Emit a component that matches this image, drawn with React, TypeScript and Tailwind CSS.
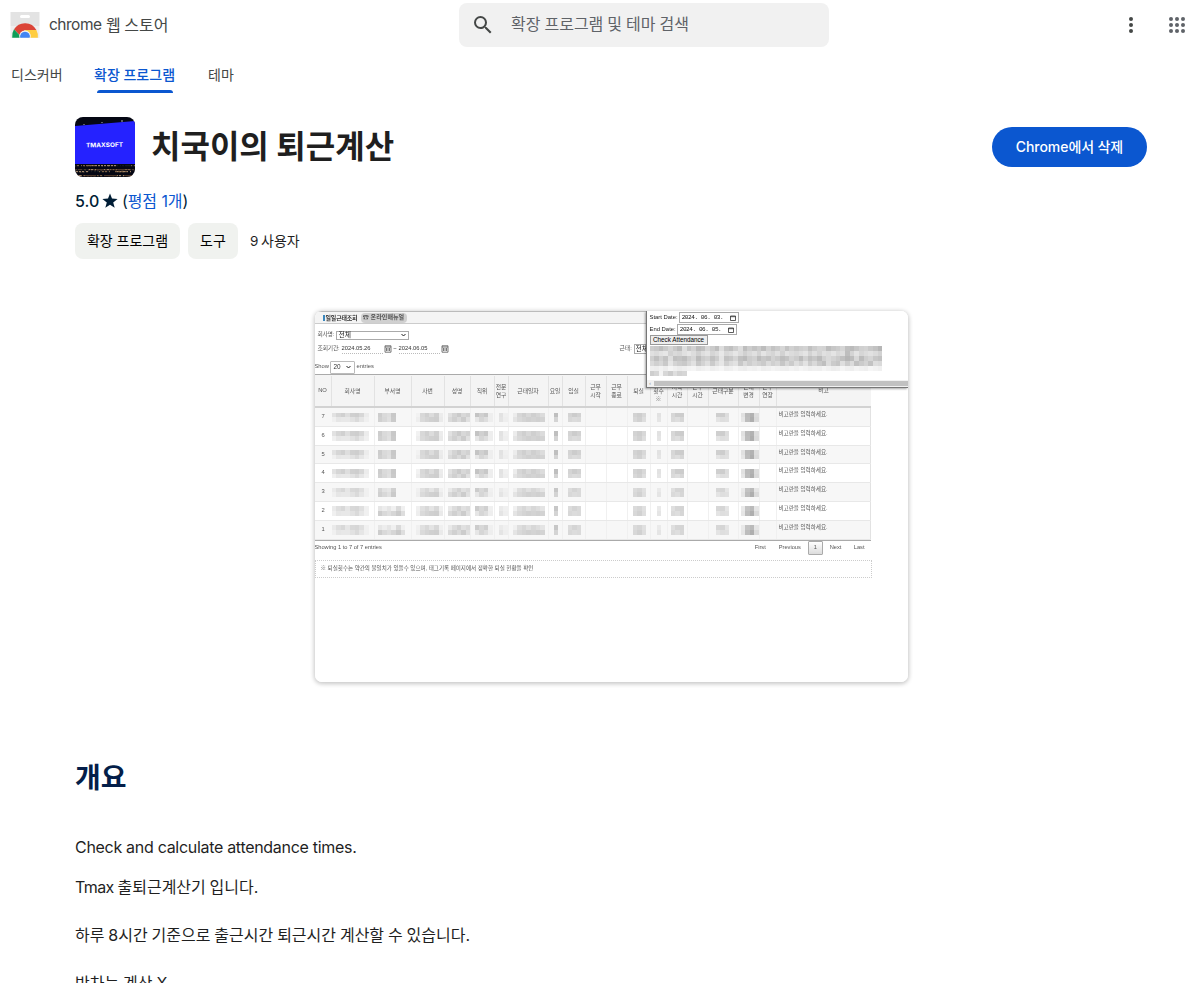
import React from "react";

type MosaicColumn = {
  label: string;
  width: string;
  offset: string;
  top: number[];
  bottom: number[];
};

const columns: MosaicColumn[] = [
  { label: "회사명", width: "w-[43px]", offset: "pl-0", top: [226, 214, 208, 222, 208, 206, 215, 236], bottom: [240, 230, 232, 232, 226, 218, 230, 240] },
  { label: "부서명", width: "w-[37px]", offset: "pl-[3px]", top: [205, 218, 222, 200], bottom: [208, 216, 224, 202] },
  { label: "사번", width: "w-[33px]", offset: "pl-[4px]", top: [242, 216, 208, 220, 208, 236], bottom: [238, 218, 212, 208, 206, 234] },
  { label: "성명", width: "w-[26px]", offset: "pl-[3px]", top: [225, 212, 202, 216, 210], bottom: [218, 208, 218, 204, 224] },
  { label: "직위", width: "w-[24px]", offset: "pl-[4px]", top: [196, 208, 200, 238], bottom: [230, 214, 222, 238] },
  { label: "전문\n연구", width: "w-[14px]", offset: "pl-[4px]", top: [226, 240], bottom: [228, 238] },
  { label: "근태일자", width: "w-[40px]", offset: "pl-[4px]", top: [236, 214, 207, 216, 207, 213, 220], bottom: [228, 217, 212, 208, 211, 208, 211] },
  { label: "요일", width: "w-[14px]", offset: "pl-[5px]", top: [191], bottom: [212] },
  { label: "입실", width: "w-[23px]", offset: "pl-[5px]", top: [212, 204, 210], bottom: [216, 220, 218] },
  { label: "근무\n시작", width: "w-[21px]", offset: "pl-0", top: [], bottom: [] },
  { label: "근무\n종료", width: "w-[21px]", offset: "pl-0", top: [], bottom: [] },
  { label: "퇴실", width: "w-[23px]", offset: "pl-[5px]", top: [211, 206, 216], bottom: [216, 209, 222] },
  { label: "외출\n횟수\n※", width: "w-[17px]", offset: "pl-[6px]", top: [226], bottom: [229] },
  { label: "지각\n시간", width: "w-[20px]", offset: "pl-[3px]", top: [215, 205, 204], bottom: [218, 222, 214] },
  { label: "근무\n시간", width: "w-[21px]", offset: "pl-0", top: [], bottom: [] },
  { label: "근태구분", width: "w-[30px]", offset: "pl-[7px]", top: [207, 205, 221], bottom: [228, 222, 224] },
  { label: "근태\n변경", width: "w-[21px]", offset: "pl-[2px]", top: [225, 187, 178, 221], bottom: [230, 189, 174, 218] },
  { label: "근무\n연장", width: "w-[17px]", offset: "pl-0", top: [], bottom: [] },
];

const rows = [7, 6, 5, 4, 3, 2, 1];

const blurRows = [
  [205, 200, 190, 202, 214, 201, 188, 222, 198, 210, 188, 194, 215, 203, 190, 221, 198, 192, 207, 222, 190, 205, 195, 204, 189, 210, 195, 203, 214, 195, 209, 201, 207, 211, 193, 205, 213, 211, 189, 199, 204, 213, 192, 187, 198, 208, 211, 201, 194, 182],
  [224, 219, 226, 230, 210, 218, 214, 224, 230, 221, 208, 222, 228, 213, 220, 232, 216, 221, 230, 220, 208, 217, 224, 211, 228, 218, 213, 224, 210, 226, 220, 216, 222, 228, 211, 223, 212, 224, 220, 228, 217, 222, 190, 212, 227, 214, 220, 225, 219, 210],
  [207, 192, 208, 195, 222, 192, 196, 190, 206, 215, 188, 204, 210, 193, 205, 228, 195, 200, 213, 193, 187, 204, 209, 188, 200, 194, 210, 202, 190, 196, 211, 204, 188, 209, 192, 200, 187, 208, 218, 211, 203, 193, 182, 189, 216, 188, 206, 213, 199, 194],
  [218, 208, 215, 201, 229, 212, 205, 201, 214, 225, 199, 211, 223, 203, 221, 231, 208, 220, 226, 200, 218, 206, 215, 209, 202, 219, 208, 215, 198, 215, 203, 222, 211, 227, 204, 217, 201, 191, 220, 203, 197, 222, 204, 219, 193, 203, 211, 195, 222, 218],
  [239, 237, 242, 237, 245, 240, 236, 239, 243, 245, 238, 241, 244, 239, 242, 246, 238, 240, 245, 239, 237, 242, 240, 244, 238, 240, 244, 241, 239, 238, 243, 240, 245, 242, 238, 240, 239, 245, 241, 237, 239, 245, 240, 238, 244, 241, 239, 246, 243, 240],
];

const gray = (value: number) => `rgb(${value} ${value} ${value})`;

function Mosaic({ column, row }: { column: MosaicColumn; row: number }) {
  const lower = row < 4;
  const long = column.label === "부서명" && row < 3;
  const top = long ? [222, 229, 221, 236, 209, 238] : column.top;
  const bottom = long ? [205, 217, 223, 214, 202, 222] : column.bottom;
  return (
    <div className={`flex flex-col pt-[4.5px] ${column.offset}`}>
      {[top, bottom].map((shades, line) => (
        <div key={line} className="flex h-[4.7px]">
          {shades.map((shade, index) => (
            <span key={index} className="h-full w-[4.67px] shrink-0" style={{ backgroundColor: gray(lower && line === 0 ? Math.min(shade + 8, 240) : shade) }} />
          ))}
        </div>
      ))}
    </div>
  );
}

function CalendarIcon({ className }: { className: string }) {
  return (
    <svg className={className} viewBox="0 0 8 8" fill="none" stroke="currentColor" strokeWidth=".8">
      <path d="M1 .8h6v6.4H1zM1 2h6M2.5 3v3M4 3v3M5.5 3v3" />
    </svg>
  );
}

function DateField({ children }: { children: string }) {
  return (
    <span className="flex h-[11px] w-[60px] items-center justify-between border border-[#aaa] pl-[2px] pr-[2px] font-['Liberation_Mono',monospace] text-[6px] leading-none text-[#111]">
      <span className="whitespace-pre tracking-[-0.4px]">{children}</span>
      <svg className="h-[6px] w-[6px]" viewBox="0 0 6 6" fill="none" stroke="#333" strokeWidth=".8">
        <path d="M.5 1h5v4.5h-5zM.5 1.7h5" />
      </svg>
    </span>
  );
}

function AttendancePopup() {
  return (
    <div className="absolute right-0 top-0 flex h-[77px] w-[262px] flex-col border-b border-l border-[#777] bg-white pt-[1px] font-['Liberation_Sans','Noto_Sans_CJK_KR',sans-serif] text-[5.9px] leading-none text-[#222] shadow-[-1px_1px_2px_rgba(0,0,0,.35)]">
      <div className="flex h-[11px] items-center gap-[1px] pl-[3px]"><span>Start Date:</span><DateField>{"2024. 06. 03."}</DateField></div>
      <div className="mt-[1px] flex h-[11px] items-center gap-[1px] pl-[3px]"><span>End Date:</span><DateField>{"2024. 06. 05."}</DateField></div>
      <div className="ml-[3px] flex h-[10px] w-[58px] items-center justify-center border border-[#999] bg-[#eee] text-[6.3px] text-black">Check Attendance</div>
      <div className="mt-[1px] pl-[3px]">
        {blurRows.map((shades, line) => (
          <div key={line} className="flex h-[5px]">
            {shades.map((shade, index) => <span key={index} className="h-full w-[4.66px]" style={{ backgroundColor: gray(shade) }} />)}
          </div>
        ))}
        <div className="flex h-[5px]">
          {[206, 214, 244, 215, 204, 222, 210, 214].map((shade, index) => <span key={index} className="h-full w-[4.66px]" style={{ backgroundColor: gray(shade) }} />)}
        </div>
      </div>
      <div className="mt-auto flex h-[7px] items-center bg-[#f1f1f1]"><span className="w-[7px] text-center text-[5px] text-[#888]">‹</span><span className="h-[5px] flex-1 bg-[#c1c1c1]" /></div>
    </div>
  );
}

function AttendanceSheet() {
  return (
    <div className="relative h-[371px] w-[593px] overflow-hidden rounded-[7px] bg-white font-['Liberation_Sans','Noto_Sans_CJK_KR',sans-serif] text-[5.8px] leading-none text-[#555]">
      <div className="blur-[0.25px]">
        <div className="flex h-[13px] items-center border-b border-[#ccc] border-t border-t-[#bbb] bg-[#f4f4f4] pl-[8px]">
          <span className="h-[6px] w-[2px] bg-[#3a87bd]" />
          <span className="ml-[1px] w-[32px] whitespace-nowrap text-[6px] font-bold tracking-[-0.2px] text-[#333]">일일근태조회</span>
          <span className="ml-[3px] flex h-[10px] w-[46px] items-center justify-center whitespace-nowrap rounded-[4px] bg-[#d0d0d0] text-[6.1px] font-bold text-[#555]">☎ 온라인매뉴얼</span>
        </div>
        <div className="mt-[6px] flex h-[10px] items-center pl-[3px]">
          <span className="w-[18px] tracking-[-.3px]">회사명:</span>
          <span className="flex h-[9px] w-[73px] items-center justify-between border border-[#aaa] px-[2px] text-[6.8px] text-[#222]">전체<svg className="h-[4px] w-[5px]" viewBox="0 0 5 4" fill="none" stroke="#222"><path d="m.5 1 2 2 2-2" /></svg></span>
        </div>
        <div className="mt-[4px] flex h-[10px] items-center pl-[3px]">
          <span className="w-[24px] whitespace-nowrap tracking-[-.2px]">조회기간:</span>
          <span className="flex h-[9px] w-[41px] items-center border-b border-dotted border-[#bbb] text-[#333]">2024.05.26</span>
          <CalendarIcon className="ml-[1px] h-[8px] w-[8px]" />
          <span className="w-[7px] text-center">~</span>
          <span className="flex h-[9px] w-[41px] items-center border-b border-dotted border-[#bbb] text-[#333]">2024.06.05</span>
          <CalendarIcon className="ml-[1px] h-[8px] w-[8px]" />
          <span className="ml-[171px] w-[14px] whitespace-nowrap">근태:</span>
          <span className="flex h-[10px] w-[30px] items-center border border-[#aaa] pl-[1px] text-[6.8px] text-[#222]">전체</span>
        </div>
        <div className="mt-[6px] flex h-[14px] items-center">
          <span className="w-[15px]">Show</span>
          <span className="flex h-[13px] w-[25px] items-center justify-between rounded-[1px] border border-[#bbb] px-[3px] text-[6.4px] text-[#333]">20<svg className="h-[4px] w-[5px]" viewBox="0 0 5 4" fill="none" stroke="#222"><path d="m.5 1 2 2 2-2" /></svg></span>
          <span className="ml-[2px]">entries</span>
        </div>
        <div className="flex h-[34px] w-[556px] border-b-2 border-t border-b-[#d2d2d2] border-t-[#aaa] bg-[#f4f4f4] pt-[1px] text-[5.8px]">
          <span className="flex w-[17px] items-center justify-center border-r border-[#e2e2e2]">NO</span>
          {columns.map((column) => <span key={column.label + column.width} className={`flex shrink-0 items-center justify-center whitespace-pre border-r border-[#e2e2e2] text-center leading-[8px] ${column.width}`}>{column.label}</span>)}
          <span className="flex flex-1 items-center justify-center">비고</span>
        </div>
        <div className="w-[556px] border-b border-[#aaa]">
          {rows.map((row) => (
            <div key={row} className={`flex h-[18.8px] border-b border-[#e8e8e8] ${row % 2 ? "bg-[#f7f7f7]" : "bg-white"}`}>
              <span className="flex w-[17px] items-center justify-center">{row}</span>
              {columns.map((column, index) => <div key={index} className={`shrink-0 overflow-hidden border-r border-[#f0f0f0] ${column.width}`}><Mosaic column={column} row={row} /></div>)}
              <span className="flex flex-1 items-start whitespace-nowrap border-r border-[#e2e2e2] pl-[2px] pt-[4px] text-[5.6px] tracking-[-.03px]">비고란을 입력하세요.</span>
            </div>
          ))}
        </div>
        <div className="flex h-[15px] w-[556px] items-center justify-between text-[5.7px]">
          <span>Showing 1 to 7 of 7 entries</span>
          <div className="flex items-center pr-[6px]">
            <span className="w-[24px]">First</span><span className="w-[29px]">Previous</span><span className="flex h-[14px] w-[15px] items-center justify-center rounded-[1px] border border-[#aaa] bg-linear-to-b from-white to-[#dcdcdc]">1</span><span className="ml-[7px] w-[24px]">Next</span><span>Last</span>
          </div>
        </div>
        <div className="mt-[4px] flex h-[18px] w-[557px] items-center border border-dotted border-[#ccc] pl-[5px] pt-[1px] text-[5.55px]">※ 퇴실횟수는 약간의 불일치가 있을수 있으며, 태그기록 페이지에서 정확한 퇴실 현황을 확인</div>
        <AttendancePopup />
      </div>
    </div>
  );
}

function StoreLogo() {
  return (
    <svg className="h-[27px] w-[30px]" viewBox="0 0 30 27">
      <path fill="#e3e3e3" d="M.5 0h29v14H.5z" />
      <path fill="#eee" d="M.5 14h29v12H.5z" />
      <rect x="10" y="3" width="10" height="3" rx="1.5" fill="white" />
      <path fill="#db4437" d="M4 17.3A12.9 12.9 0 0 1 26.4 18H15l-5.5 5z" />
      <path fill="#0f9d58" d="M4 17.3A13 13 0 0 0 2.2 25.8H12z" />
      <path fill="#ffcd40" d="M15 18h11.4a13 13 0 0 1 1.4 7.8H17z" />
      <path fill="#f1f1f1" d="M9.3 25.8a5.9 5.9 0 1 1 11.4 0z" />
      <path fill="#4285f4" d="M10.4 25.8a4.8 4.8 0 1 1 9.2 0z" />
    </svg>
  );
}

const crowdColors = ["#7b5f43", "#24262c", "#315049", "#a18467", "#1a1a20", "#4d382a", "#131a1f", "#65706a", "#2a211c"];

function ExtensionIcon() {
  return (
    <svg className="h-[60px] w-[60px] rounded-[8px]" viewBox="0 0 60 60">
      <path fill="#050713" d="M0 0h60v60H0z" />
      <path fill="#2522ff" d="m0 9 60-5v43H0z" />
      <path stroke="#ddd" strokeWidth=".8" d="M9 7v1M27 5v1M47 3v2" />
      {Array.from({ length: 220 }, (_, index) => (
        <rect key={index} x={(index * 37 + (index >> 3) * 11) % 60} y={48 + ((index * index * 7 + index * 3) % 12)} width={1 + (index % 2)} height="1.2" fill={crowdColors[(index * index + index * 5) % 9]} />
      ))}
      <text x="11" y="30" fill="white" fontFamily="Inter, sans-serif" fontSize="6" fontWeight="700" textLength="37" lengthAdjust="spacingAndGlyphs" transform="rotate(-1 30 28)">TMAXSOFT</text>
    </svg>
  );
}

export default function App() {
  return (
    <div className="h-[983px] overflow-hidden bg-white font-['Inter','Noto_Sans_CJK_KR',sans-serif] text-[#1f1f1f]">
      <header className="flex h-[50px] items-center justify-between pl-[10px] pr-[7px]">
        <div className="flex w-[449px] items-center gap-[9px]">
          <StoreLogo />
          <span className="flex items-center pb-px text-[16px] leading-6 text-[#444746]"><span className="w-[57px] text-[15.5px] tracking-[-0.5px]">chrome</span><span className="[word-spacing:-1px]">웹 스토어</span></span>
        </div>
        <div className="flex h-11 w-[370px] items-center rounded-[8px] bg-[#f1f1f1] pl-[12px]">
          <svg className="h-6 w-6" viewBox="0 0 24 24" fill="#444746"><path d="M15.5 14h-.79l-.28-.27A6.47 6.47 0 0 0 16 9.5 6.5 6.5 0 1 0 9.5 16c1.61 0 3.09-.59 4.23-1.57l.27.28v.79l5 4.99L20.49 19zm-6 0a4.5 4.5 0 1 1 0-9 4.5 4.5 0 0 1 0 9" /></svg>
          <span className="ml-4 pb-[2px] text-[16px] leading-6 text-[#5f6368] [word-spacing:-0.5px]">확장 프로그램 및 테마 검색</span>
        </div>
        <div className="flex flex-1 items-center justify-end gap-[36px]">
          <svg className="h-4 w-1" viewBox="0 0 4 16" fill="#444746"><circle cx="2" cy="2" r="2" /><circle cx="2" cy="8" r="2" /><circle cx="2" cy="14" r="2" /></svg>
          <svg className="h-4 w-4" viewBox="0 0 16 16" fill="#5f6368">
            {[2, 8, 14].map((y) => [2, 8, 14].map((x) => <circle key={`${x}-${y}`} cx={x} cy={y} r="2" />))}
          </svg>
        </div>
      </header>
      <nav className="flex h-[43px] gap-8 pl-[11px] text-[14px] leading-[50px] text-[#444746]">
        <span className="w-[51px] whitespace-nowrap">디스커버</span>
        <span className="flex w-[82px] flex-col whitespace-nowrap font-medium text-[#0b57d0]"><span className="h-10">확장 프로그램</span><span className="ml-[3px] h-[3px] w-[76px] rounded-t-[3px] bg-[#0b57d0]" /></span>
        <span>테마</span>
      </nav>
      <main className="pl-[75px] pr-[45px] pt-6">
        <section className="flex h-[60px] items-center justify-between">
          <div className="flex items-center gap-4"><ExtensionIcon /><h1 className="text-[32px] font-bold leading-[60px]">치국이의 퇴근계산</h1></div>
          <button className="h-10 w-[155px] rounded-full bg-[#0b57d0] pb-[2px] text-[14px] font-medium text-white"><span className="tracking-[-0.05px]">Chrome</span><span className="[word-spacing:-0.5px]">에서 삭제</span></button>
        </section>
        <div className="mt-3 flex h-6 items-center text-[16px] leading-6 text-[#001d35]">
          <span className="w-[27px] font-medium">5.0</span>
          <svg className="h-4 w-4" viewBox="0 0 16 16" fill="#001d35"><path d="m8 .4 2 5.2 5.6.3-4.4 3.5 1.5 5.4L8 11.7l-4.7 3.1 1.5-5.4L.4 5.9 6 5.6z" /></svg>
          <span className="ml-[4px] tracking-[-0.1px]">(<span className="text-[#0b57d0]">평점 1개</span>)</span>
        </div>
        <div className="mt-[10px] flex h-9 items-center text-[14px] leading-5">
          <span className="flex h-9 w-[105px] items-center justify-center rounded-[8px] bg-[#f0f2ef] text-black">확장 프로그램</span>
          <span className="ml-2 flex h-9 w-[50px] items-center justify-center rounded-[8px] bg-[#f0f2ef] text-black">도구</span>
          <span className="ml-3 flex gap-[3px] text-[#1f1f1f]"><span className="w-[8px] text-[13.5px]">9</span><span>사용자</span></span>
        </div>
        <div className="mt-[52px] flex justify-center"><div className="rounded-[7px] shadow-[0_1px_4px_1px_rgba(0,0,0,.22)]"><AttendanceSheet /></div></div>
        <h2 className="mt-[78px] text-[28px] font-bold leading-9 text-[#041e49]">개요</h2>
        <div className="mt-[39px] text-[16px] leading-6">
          <p className="tracking-[-0.3px]">Check and calculate attendance times.</p>
          <p className="mt-4 [word-spacing:-0.8px]"><span className="tracking-[-0.6px]">Tmax</span> 출퇴근계산기 입니다.</p>
          <p className="mt-6 [word-spacing:-0.6px]">하루 8시간 기준으로 출근시간 퇴근시간 계산할 수 있습니다.</p>
          <p className="mt-6 [word-spacing:-0.6px]">반차는 계산 X</p>
        </div>
      </main>
    </div>
  );
}
